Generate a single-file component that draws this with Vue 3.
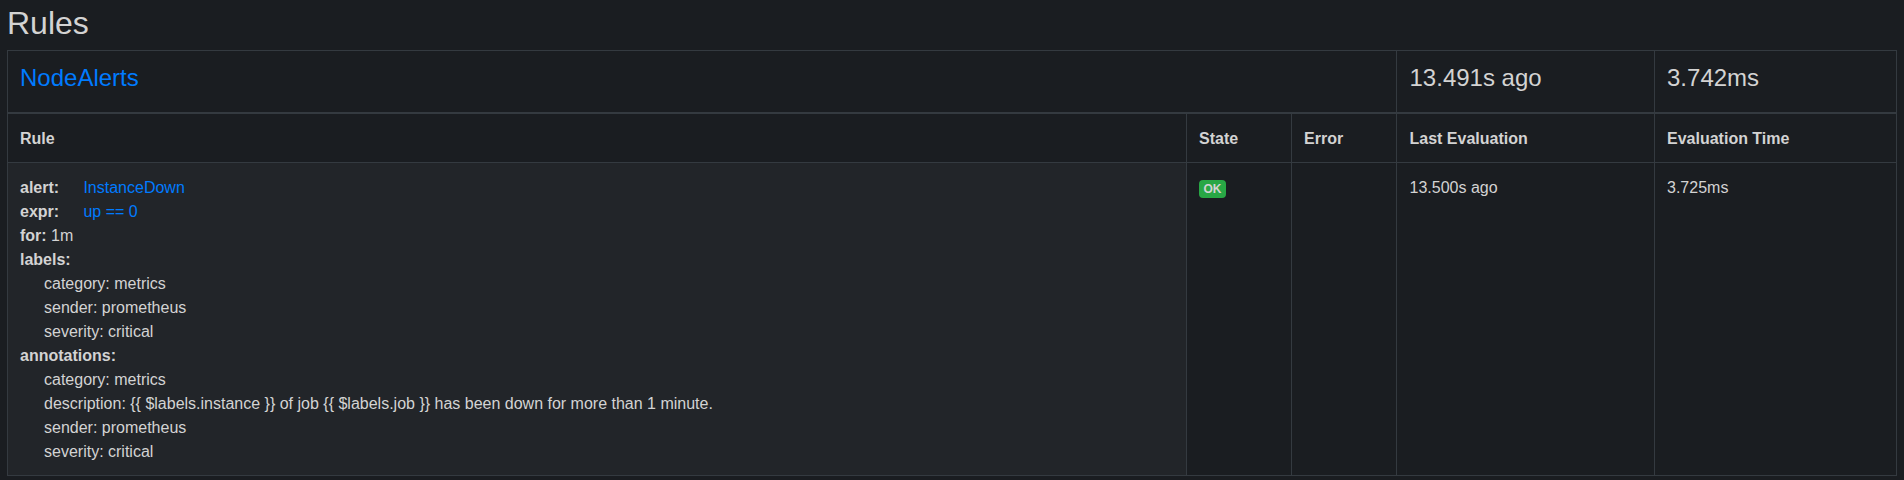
<script setup>
const labels = ['category: metrics', 'sender: prometheus', 'severity: critical']
const annotations = [
  'category: metrics',
  'description: {{ $labels.instance }} of job {{ $labels.job }} has been down for more than 1 minute.',
  'sender: prometheus',
  'severity: critical',
]
</script>

<template>
  <main class="page">
    <h2>Rules</h2>
    <table>
      <colgroup>
        <col class="c-rule" /><col class="c-state" /><col class="c-state" /><col class="c-last" /><col />
      </colgroup>
      <thead>
        <tr class="group">
          <td colspan="3"><a>NodeAlerts</a></td>
          <td class="last">13.491s ago</td>
          <td>3.742ms</td>
        </tr>
      </thead>
      <tbody>
        <tr class="heads">
          <td>Rule</td><td>State</td><td>Error</td><td class="last">Last Evaluation</td><td>Evaluation Time</td>
        </tr>
        <tr class="body">
          <td class="rule">
            <div><strong class="key">alert:</strong><a>InstanceDown</a></div>
            <div><strong class="key">expr:</strong><a>up == 0</a></div>
            <div><strong>for:</strong> 1m</div>
            <div><strong>labels:</strong></div>
            <div v-for="l in labels" :key="l" class="sub">{{ l }}</div>
            <div><strong>annotations:</strong></div>
            <div v-for="a in annotations" :key="a" class="sub">{{ a }}</div>
          </td>
          <td><span class="badge">OK</span></td>
          <td></td>
          <td class="last">13.500s ago</td>
          <td>3.725ms</td>
        </tr>
      </tbody>
    </table>
  </main>
</template>

<style>
body {
  background: #1a1d21;
}
</style>

<style scoped>
.page {
  box-sizing: border-box;
  height: 480px;
  overflow: hidden;
  padding: 4px 7px 0;
  background: #1a1d21;
  color: #d3d3d3;
  font: 16px/24px "Liberation Sans", Arial, sans-serif;
}
h2 {
  margin: 0 0 8px;
  font-size: 32px;
  font-weight: 400;
  line-height: 38px;
}
table {
  box-sizing: border-box;
  width: 1890px;
  table-layout: fixed;
  border-collapse: separate;
  border-spacing: 0;
  border: solid #343a40;
  border-width: 0 1px 1px 0;
}
.c-rule { width: 1179px; }
.c-state { width: 105px; }
.c-last { width: 258px; }
td {
  box-sizing: border-box;
  padding: 13px 12px 11px;
  border: solid #343a40;
  border-width: 1px 0 0 1px;
  vertical-align: top;
}
a { color: #007bff; }
.last { padding-left: 12.5px; }
.group td {
  height: 62px;
  font-size: 24px;
  line-height: 28.8px;
}
.heads td {
  border-top-width: 2px;
  font-weight: 700;
}
.rule { background: #222529; }
.key {
  display: inline-block;
  width: 63.4px;
}
.sub { padding-left: 24px; }
.badge {
  display: inline-block;
  padding: 3px 4.5px;
  border-radius: 4px;
  background: #28a745;
  font-size: 12px;
  font-weight: 700;
  line-height: 12px;
  vertical-align: baseline;
}
</style>
